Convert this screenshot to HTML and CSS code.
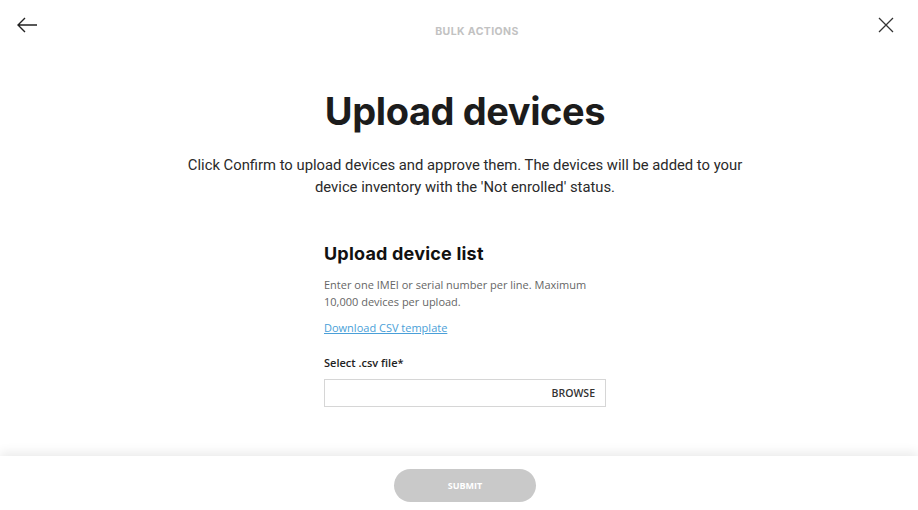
FILE: index.html
```html
<!DOCTYPE html>
<html>
<head>
<meta charset="utf-8">
<link rel="stylesheet" href="styles.css">
</head>
<body>
<div class="page">
  <header class="topbar">
    <button class="icon-btn" aria-label="Back">
      <svg width="22" height="16" viewBox="0 0 22 16"><path d="M21 8H2M9 1L2 8l7 7" fill="none" stroke="#222" stroke-width="1.4"/></svg>
    </button>
    <div class="top-title">BULK ACTIONS</div>
    <button class="icon-btn" aria-label="Close">
      <svg width="16" height="16" viewBox="0 0 16 16"><path d="M1 1l14 14M15 1L1 15" fill="none" stroke="#333" stroke-width="1.3"/></svg>
    </button>
  </header>
  <main class="content">
    <h1 class="title">Upload devices</h1>
    <p class="lead">Click Confirm to upload devices and approve them. The devices will be added to your device inventory with the 'Not enrolled' status.</p>
    <section class="form">
      <h2 class="form-title">Upload device list</h2>
      <p class="help">Enter one IMEI or serial number per line. Maximum 10,000 devices per upload.</p>
      <a class="link" href="#">Download CSV template</a>
      <label class="label">Select .csv file*</label>
      <div class="file-input"><span class="browse">BROWSE</span></div>
    </section>
  </main>
  <footer class="footer">
    <button class="submit">SUBMIT</button>
  </footer>
</div>
</body>
</html>
```
FILE: styles.css
```css
* { box-sizing: border-box; }
html, body { margin: 0; padding: 0; background: #fff; }
body { font-family: "Open Sans", "Noto Sans", sans-serif; color: #222; }
.page { width: 918px; height: 510px; display: flex; flex-direction: column; overflow: hidden; }
.topbar { height: 60px; display: flex; align-items: flex-start; justify-content: space-between; padding: 16px 24px 0 16px; }
.icon-btn { background: none; border: 0; padding: 0; margin: 0; width: 22px; height: 16px; display: flex; align-items: center; }
.icon-btn:first-child { margin-top: 1px; }
.icon-btn:last-child { width: 16px; margin-top: 1px; }
.top-title { font-family: "Inter", sans-serif; font-weight: 700; font-size: 10.5px; letter-spacing: 0.4px; color: #c2c2c2; margin-top: 9px; margin-left: 38px; }
.content { flex: 1; display: flex; flex-direction: column; align-items: center; padding-left: 12px; }
.title { font-family: "Inter", sans-serif; font-weight: 700; font-size: 38px; margin: 27px 0 0; line-height: 48px; color: #1c1c1c; letter-spacing: -0.4px; }
.lead { width: 580px; text-align: center; font-family: "Roboto", sans-serif; font-size: 14.8px; line-height: 22px; margin: 19px 0 0; color: #2a2a2a; }
.form { width: 282px; margin-top: 43px; display: flex; flex-direction: column; align-items: flex-start; }
.form-title { font-family: "Inter", sans-serif; font-weight: 700; font-size: 18px; margin: 0; line-height: 26px; color: #111; letter-spacing: 0.2px; }
.help { font-size: 11px; line-height: 17px; color: #666; margin: 9px 0 0; width: 270px; }
.link { font-size: 11px; color: #4a9fd8; margin-top: 10px; line-height: 16px; }
.label { font-size: 11px; font-weight: 600; color: #222; margin-top: 19px; line-height: 16px; }
.file-input { width: 282px; height: 28px; border: 1px solid #d6d6d6; margin-top: 8px; display: flex; align-items: center; justify-content: flex-end; padding-right: 10px; }
.browse { font-size: 10.5px; font-weight: 600; color: #333; }
.footer { height: 54px; box-shadow: 0 -4px 10px rgba(0,0,0,0.08); display: flex; justify-content: center; padding-top: 13px; padding-left: 12px; }
.submit { width: 142px; height: 33px; border-radius: 17px; border: 0; background: #c9c9c9; color: #fff; font-family: "Open Sans", sans-serif; font-weight: 700; font-size: 9px; }
```
